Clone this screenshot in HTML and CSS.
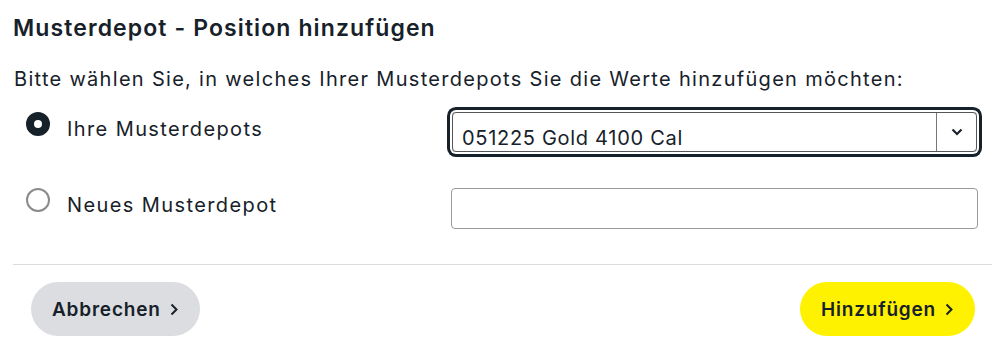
FILE: index.html
```html
<!DOCTYPE html>
<html lang="de">
<head>
    <meta charset="UTF-8">
    <meta name="viewport" content="width=device-width, initial-scale=1.0">
    <title>Musterdepot - Position hinzufügen</title>
    <link rel="stylesheet" href="styles.css">
</head>
<body>
    <div class="dialog">
        <h1 class="title">Musterdepot - Position hinzufügen</h1>
        <p class="intro">Bitte wählen Sie, in welches Ihrer Musterdepots Sie die Werte hinzufügen möchten:</p>

        <div class="options">
            <label class="choice">
                <span class="radio checked"></span>
                <span class="choice-text">Ihre Musterdepots</span>
            </label>
            <div class="select focused">
                <span class="select-value">051225 Gold 4100 Cal</span>
                <span class="select-arrow">
                    <svg width="12" height="8" viewBox="0 0 12 8"><path d="M1.5 1.5 L6 6 L10.5 1.5" fill="none" stroke="#1a2329" stroke-width="2.2"/></svg>
                </span>
            </div>

            <label class="choice">
                <span class="radio"></span>
                <span class="choice-text">Neues Musterdepot</span>
            </label>
            <div class="input"></div>
        </div>

        <hr class="divider">

        <div class="actions">
            <button class="button secondary">Abbrechen
                <svg class="chev" width="8" height="13" viewBox="0 0 8 13"><path d="M1.5 1.5 L6.5 6.5 L1.5 11.5" fill="none" stroke="#17212a" stroke-width="2"/></svg>
            </button>
            <button class="button primary">Hinzufügen
                <svg class="chev" width="8" height="13" viewBox="0 0 8 13"><path d="M1.5 1.5 L6.5 6.5 L1.5 11.5" fill="none" stroke="#17212a" stroke-width="2"/></svg>
            </button>
        </div>
    </div>
</body>
</html>
```

FILE: styles.css
```css
body {
    margin: 0;
    background: #fff;
    color: #17212a;
    font-family: "Inter", "Liberation Sans", sans-serif;
}
.dialog {
    padding: 14px 6px 0 13px;
}
.title {
    margin: 0;
    font-size: 23px;
    line-height: 28px;
    font-weight: 600;
    letter-spacing: 1.1px;
}
.intro {
    margin: 25px 0 0 1px;
    font-size: 20px;
    line-height: 24px;
    letter-spacing: 1.3px;
}
.options {
    display: grid;
    grid-template-columns: 1fr 527px;
    row-gap: 36px;
    margin-top: 21px;
    padding: 0 14px 0 13px;
}
.choice {
    display: flex;
    align-items: flex-start;
    gap: 17px;
    font-size: 20px;
    line-height: 24px;
    letter-spacing: 1.4px;
}
.choice-text {
    padding-top: 5px;
}
.radio {
    flex: none;
    width: 24px;
    height: 24px;
    box-sizing: border-box;
    border-radius: 50%;
    border: 2px solid #8a8a8a;
    background: #fff;
}
.radio.checked {
    border: 8px solid #17212a;
}
.select {
    display: flex;
    height: 40px;
    box-sizing: border-box;
    border: 1px solid #555;
    border-radius: 4px;
    margin-left: 1px;
    margin-right: 1px;
}
.select.focused {
    box-shadow: 0 0 0 2px #fff, 0 0 0 5px #17212a;
}
.select-value {
    flex: 1;
    height: 33px;
    overflow: hidden;
    padding: 13px 0 0 9px;
    box-sizing: border-box;
    font-size: 20px;
    line-height: 24px;
    letter-spacing: 0.7px;
}
.select-arrow {
    width: 39px;
    border-left: 1px solid #777;
    display: flex;
    align-items: center;
    justify-content: center;
}
.input {
    height: 41px;
    box-sizing: border-box;
    border: 1px solid #9a9a9a;
    border-radius: 4px;
}
.divider {
    margin: 35px 0 0 0;
    border: none;
    border-top: 1px solid #dcdcdc;
}
.actions {
    display: flex;
    justify-content: space-between;
    margin-top: 17px;
    padding: 0 17px 0 18px;
}
.button {
    display: flex;
    align-items: center;
    gap: 9px;
    height: 54px;
    border: none;
    border-radius: 27px;
    padding: 0 22px 0 21px;
    font-family: inherit;
    font-size: 19px;
    font-weight: 600;
    letter-spacing: 0.8px;
    color: #17212a;
    cursor: pointer;
}
.button .chev {
    margin-top: 1px;
}
.button.secondary {
    background: #dcdde0;
}
.button.primary {
    background: #fff200;
}
```
